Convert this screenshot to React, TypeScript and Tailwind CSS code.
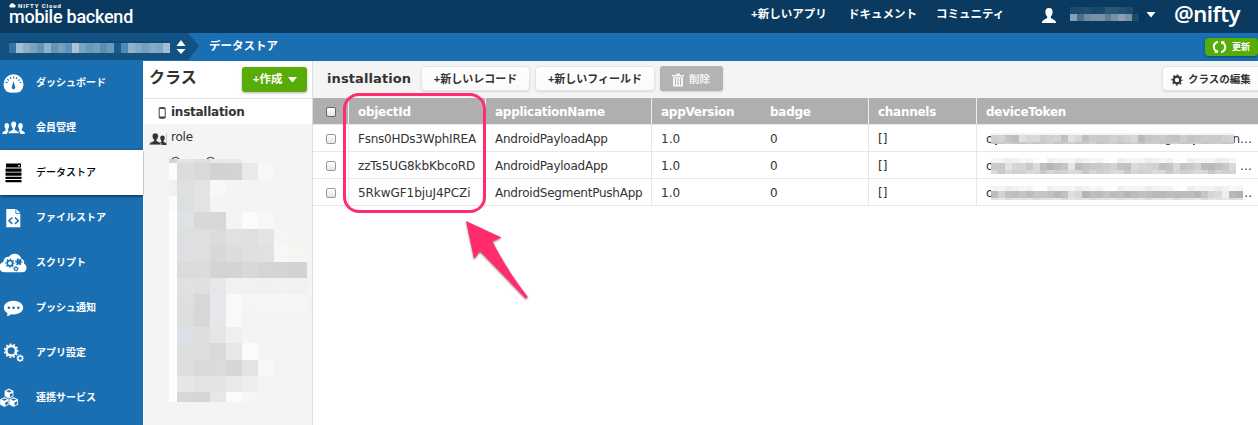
import React from "react";

const jp = "font-['Liberation_Sans','Noto_Sans_CJK_JP',sans-serif]";
const verdana = "font-['DejaVu_Sans','Noto_Sans_CJK_JP',sans-serif]";

function Gear({ cx, cy, r, w, color = "#fff", teeth = 8, tooth = 2 }: { cx: number; cy: number; r: number; w: number; color?: string; teeth?: number; tooth?: number }) {
  const outer = r + w / 2 + tooth / 2 - 0.2;
  const step = (2 * Math.PI * outer) / (teeth * 2);
  return (
    <g fill="none" stroke={color}>
      <circle cx={cx} cy={cy} r={r} strokeWidth={w} />
      <circle cx={cx} cy={cy} r={outer} strokeWidth={tooth} strokeDasharray={`${step} ${step}`} strokeDashoffset={step / 2} />
    </g>
  );
}

const person = "M0 0C-2.600 0-3.800 2-3.400 4.600C-3.200 6.400-2.400 7.600-1.700 8.300V9.600C-3 10.800-6.500 11-6.800 14.500H6.800C6.500 11 3 10.800 1.700 9.600V8.300C2.400 7.600 3.200 6.400 3.400 4.600C3.800 2 2.600 0 0 0Z";

function GaugeIcon() {
  return (
    <svg width="28" height="24" viewBox="0 0 28 24">
      <path d="M6.500 20.500A10 10 0 1 1 20.500 20.500Q18.500 21.800 13.500 21.800T6.500 20.500Z" fill="#fff" />
      <path d="M6.500 12A7.200 7.200 0 0 1 20.500 12" fill="none" stroke="#1a6fb2" strokeWidth="2" strokeDasharray="1.1 1.900" />
      <path d="M13.500 10L15 15.500A1.800 1.800 0 1 1 12 15.500Z" fill="#1a6fb2" />
    </svg>
  );
}

function MembersIcon() {
  return (
    <svg width="28" height="24" viewBox="0 0 28 24">
      <g fill="#fff">
        <path d={person} transform="translate(6.800 7) scale(.65 .75)" />
        <path d={person} transform="translate(20.500 7) scale(.65 .75)" />
        <path d={person} transform="translate(13.700 5) scale(.9 .88)" stroke="#1a6fb2" strokeWidth="1.300" />
      </g>
    </svg>
  );
}

function ServerIcon() {
  return (
    <svg width="28" height="24" viewBox="0 0 28 24">
      <g fill="#000">
        <rect x="6" y="2.500" width="15" height="4" />
        <rect x="5.500" y="7.400" width="16" height="3.300" rx=".5" />
        <rect x="5.500" y="11.600" width="16" height="3.200" rx=".5" />
        <rect x="5.500" y="15.700" width="16" height="2.400" rx=".5" />
        <rect x="5.500" y="18.900" width="16" height="2.400" rx=".5" />
      </g>
      <rect x="18" y="4.200" width="2" height="1.200" fill="#fff" />
    </svg>
  );
}

function FileCodeIcon() {
  return (
    <svg width="28" height="24" viewBox="0 0 28 24">
      <path d="M6.300 3H15.500V7.800H20.300V21.200H6.300Z M16.300 3L20.300 7H16.300Z" fill="#fff" />
      <path d="M12.300 11.500L9 14.700L12.300 17.900M15 11.500L18.300 14.700L15 17.900" fill="none" stroke="#1a6fb2" strokeWidth="1.500" />
    </svg>
  );
}

function ScriptIcon() {
  return (
    <svg width="28" height="24" viewBox="0 0 28 24">
      <path d="M4.500 21.300A5.300 5.300 0 0 1 3.300 10.900A5.300 5.300 0 0 1 9 5.700A6.900 6.900 0 0 1 21.300 7.600A4.300 4.300 0 0 1 24 12.500A4.700 4.700 0 0 1 22.500 21.300Z" fill="#fff" />
      <Gear cx={10} cy={12.200} r={2.700} w={1.700} color="#1a6fb2" tooth={1.300} />
      <Gear cx={18.800} cy={10.800} r={1.400} w={2.400} color="#1a6fb2" tooth={1.200} teeth={6} />
      <Gear cx={16} cy={17.700} r={1.500} w={1.100} color="#1a6fb2" tooth={0.900} teeth={6} />
    </svg>
  );
}

function ChatIcon() {
  return (
    <svg width="28" height="24" viewBox="0 0 28 24">
      <path d="M13.500 4.700C19 4.700 23.200 7.700 23.200 11.600S19 18.500 13.500 18.500C12.500 18.500 11.600 18.400 10.700 18.200C9.500 19.700 8.300 20 6.800 20C7.500 19 7.500 18 7.300 17.100C5.200 15.800 3.900 13.900 3.900 11.600C3.900 7.700 8 4.700 13.500 4.700Z" fill="#fff" />
      <g fill="#1a6fb2"><circle cx="8.900" cy="11.800" r="1.300" /><circle cx="13.600" cy="11.800" r="1.300" /><circle cx="18.300" cy="11.800" r="1.300" /></g>
    </svg>
  );
}

function SettingsIcon() {
  return (
    <svg width="28" height="24" viewBox="0 0 28 24">
      <Gear cx={11.200} cy={9.800} r={4.800} w={2.500} tooth={1.500} teeth={11} />
      <Gear cx={20.200} cy={17.200} r={2.300} w={1.500} tooth={0.900} teeth={8} />
    </svg>
  );
}

function CubesIcon() {
  const cube = "M0-5L4.500-2.800V2.700L0 5.100L-4.500 2.700V-2.800Z";
  return (
    <svg width="28" height="24" viewBox="0 0 28 24">
      {[[9, 7.600], [4.400, 16], [13.600, 16]].map(([x, y]) => (
        <g key={x} transform={`translate(${x} ${y})`}>
          <path d={cube} fill="#fff" stroke="#1a6fb2" strokeWidth=".3" />
          <path d="M-2.800-2.400L0-1.200L2.800-2.400L0-3.600ZM.9.500L3.500-.7V2.100L.9 3.500Z" fill="#1a6fb2" />
        </g>
      ))}
    </svg>
  );
}

const menu = [
  { label: "ダッシュボード", icon: <GaugeIcon /> },
  { label: "会員管理", icon: <MembersIcon /> },
  { label: "データストア", icon: <ServerIcon />, active: true },
  { label: "ファイルストア", icon: <FileCodeIcon /> },
  { label: "スクリプト", icon: <ScriptIcon /> },
  { label: "プッシュ通知", icon: <ChatIcon /> },
  { label: "アプリ設定", icon: <SettingsIcon /> },
  { label: "連携サービス", icon: <CubesIcon /> },
];

function Strip({ colors, cell, height, y = 0, x = 0 }: { colors: string[]; cell: number; height: number; y?: number; x?: number }) {
  return <>{colors.map((c, i) => <rect key={i} x={x + i * cell} y={y} width={cell + 0.05} height={height} fill={c} shapeRendering="crispEdges" />)}</>;
}

const xs = [8, 25, 41, 57, 73, 89, 105, 121, 138];
const ys = [4, 21, 37, 53, 70, 86, 103, 119, 135, 152, 168, 184, 201, 217, 233, 243];
const blocks = [
  ["#dcdcdc", "#d9d9d9", "#d2d2d2", "#d3d3d3", "#e9e9e9", "#f7f7f7"],
  ["#dfe0de", "#e3e3e3", "#f8f8f8", "#f4f4f4"],
  ["#dce0df", "#e2e3e5", "#f4f4f5", "#f3f4f3", "#f3f4f3", "#f3f4f3", "#f3f4f3", "#f3f4f3"],
  ["#dee1e6", "#d8d8d8", "#d7d7d7", "#f4f4f4", "#fbfbfb", "#f7f7f7"],
  ["#dde0de", "#dee0df", "#dbdddc", "#e1e1e1", "#dfdfdf", "#e4e4e4", "#f5f5f5"],
  ["#dddfe3", "#dfdfdf", "#d8d8d8", "#dcdcdc", "#dde0de", "#e1e1e1", "#f7f7f7", "#f5f5f2"],
  ["#d9dcdb", "#dadddb", "#d4d4d4", "#d4d4d4", "#d8d8d8", "#d3d6d4", "#d2d5d3", "#d2d2d2"],
  ["#dfe1e5", "#e0e0e0", "#e6e8e7", "#f1f1f1", "#f1f1f1", "#f0f0f0", "#f2f2f2", "#f1f1f1"],
  ["#dee0df", "#d7d7d7", "#e6e7ea", "#f9f9f9", "#f5f5f5", "#f6f6f6", "#f6f6f6", "#f6f6f6"],
  ["#dcdedd", "#d7d7d7", "#e6e7e9", "#f9f9f9", "#f3f3f3"],
  ["#dde0e5", "#dedede", "#e4e6e5", "#efefef", "#f4f4f4"],
  ["#dddfde", "#dcdedd", "#d9d9d9", "#e7e7e7", "#fbfbfb", "#f3f3f3"],
  ["#dcdedd", "#d9d9d9", "#dadcdb", "#d5d7d6", "#e2e4e3", "#f7f7f7"],
  ["#e4e6e9", "#e3e3e3", "#e3e3e3", "#e9e9e9", "#eeeeee", "#f4f4f4"],
  ["#d6d8d7", "#d5d5d5", "#e6e8e7", "#fbfbfb", "#f6f6f6"],
];

function ClassMosaic() {
  return (
    <svg width="138" height="243" className="block" shapeRendering="crispEdges">
      <rect width="8" height="243" fill="#fffefa" />
      <rect y="4" width="8" height="17" fill="#fcfcfc" /><rect y="21" width="8" height="16" fill="#f1f1f1" /><rect y="37" width="8" height="16" fill="#fffaf7" />
      <rect width="8" height="4" fill="#d3d3d3" /><rect x="8" width="17" height="4" fill="#e4e4e4" /><rect x="25" width="16" height="4" fill="#dfdfdf" /><rect x="41" width="32" height="4" fill="#e9e9e9" />
      {blocks.map((row, r) => row.map((c, i) => <rect key={`${r}-${i}`} x={xs[i]} y={ys[r]} width={xs[i + 1] - xs[i]} height={ys[r + 1] - ys[r]} fill={c} />))}
    </svg>
  );
}

const bars = [
  "#cfd0cf #d3d5d3 #c3c3c3 #bdbebf #dfe1e4 #d7d7d7 #d9dada #cdcdcd #d1d1d1 #d3d3d3 #c1c1c1 #e0e1e2 #d8d8d8 #bec0bf #cccccc #cacaca #cacaca #d1d1d1 #cccccc #d2d2d2 #d7d7d7 #bababa #c6c6c6 #cacaca #cacaca #c5c5c5 #c1c1c1 #cecece #c3c3c3 #c6c6c6 #cbcbcb #cbcbcb #c9c9c9 #d1d1d3 #d3d3d5",
  "#c8c9c8 #c9cac9 #e3e3e3 #d4d6d4 #d5d5d5 #c9c9c9 #d9dada #bfbfc1 #b5b6b8 #bdbebd #c6c6c6 #e5e5e5 #bcbdb8 #c6c6c1 #c7c8c7 #c8c9c8 #cdcdcd #d2d3d4 #c4c4c4 #bfc0bf #dcdcdc #d5d5d5 #d3d3d3 #d1d1d1 #bebfc0 #c2c4c6 #d7d8d7 #c2c3c2 #c7c8c7 #d1d1d1 #bcbcbe #b8b8bb #c1c1c3 #c8c8c8 #d7d9dc",
  "#bbbcb8 #d2d2d2 #c1c1c1 #bdbebd #c3c4c3 #bbbcbc #c5c5c5 #c4c5c4 #c1c1c1 #b7b8b9 #bfc0bf #dddede #d8d8d8 #b4b5b3 #bebebe #bbbcbb #c3c3c3 #bbbcbb #bfbfbf #b4b5b4 #bbbcbb #c0c0c2 #bebebe #b8b9b9 #b8b8bb #bcbdbf #bbbbbd #bdbdbe #bdbdbd #b5b6b5 #c4c5c4 #d4d5d4 #dbdbdb #eeeeee #b9b9b6 #b1b4b6",
].map((s) => s.split(" "));
const haze = "#f4f4f4 #f5f5f5 #ededed #f1f1f1 #f7f7f7 #f3f3f3 #fcfcfc #ffffff #efefef #f5f5f5".split(" ");
const lower = [
  "#c4c5c4 #cfcfcf #c9c9c9".split(" "),
  "#d7d8d7 #dadada #d2d2d2 #cfcfcf #d5d5d5 #c7c8c7".split(" "),
  "#e0e1e0 #e6e6e6 #dadbda #e3e3e3".split(" "),
];

function TokenCell({ row }: { row: number }) {
  const n = bars[row].length;
  return (
    <div className="relative flex h-full items-center pl-[9px] pt-px">
      <span>o</span>
      <span className="absolute right-[6px]">{row === 0 ? "n…" : row === 1 ? "…" : ".."}</span>
      <svg className="absolute left-[14px] top-[4px]" width={row === 0 ? 243 : 254} height="20">
        <Strip colors={Array.from({ length: n }, (_, i) => (row === 0 ? "#f4f4f4" : haze[i % 10]))} cell={7} height={6} y={row === 0 ? 4 : row === 1 ? 2 : 3} />
        <Strip colors={bars[row]} cell={7} height={8} y={row === 0 ? 6 : row === 1 ? 7 : 8} />
        <Strip colors={Array.from({ length: n }, (_, i) => lower[row][(i * 5) % lower[row].length])} cell={7} height={row === 1 ? 4 : 2} y={row === 0 ? 13 : row === 1 ? 14 : 15} />
        {row === 0 && <path d="M4 15.500H6M175 15.500H179M202 15.500H204" stroke="#555" />}
      </svg>
    </div>
  );
}

const records = [
  ["Fsns0HDs3WphIREA", "AndroidPayloadApp", "tracking-[-0.23px]"],
  ["zzTs5UG8kbKbcoRD", "AndroidPayloadApp", "tracking-[-0.12px]"],
  ["5RkwGF1bjuJ4PCZi", "AndroidSegmentPushApp", "tracking-[-0.06px]"],
];
const columns = "grid grid-cols-[35px_137px_166px_108px_109px_108px_282px]";

function Box({ dark = false }: { dark?: boolean }) {
  return <span className={`ml-[13px] size-[10px] rounded-[2px] border bg-gradient-to-b from-white to-[#e5e5e5] ${dark ? "border-[#666]" : "border-[#999]"}`} />;
}

const button = "flex items-center rounded-[4px] border border-[#e5e5e5] bg-gradient-to-b from-white to-[#fafafa] pt-[2px] font-bold text-[#333] shadow-[0_1px_2px_rgba(0,0,0,0.12)]";
const head = "flex items-center border-l border-[#eee] pl-[9px] tracking-[-0.28px]";
const cell = "flex items-center border-l border-[#e8e8e8] pl-[9px]";

export default function App() {
  return (
    <div className={`relative flex h-[425px] w-[1258px] flex-col overflow-hidden bg-white text-[#333] ${jp}`}>
      <header className="flex h-[33px] shrink-0 bg-[#0a3a5f] text-white">
        <div className="w-[751px] pl-[9px]">
          <div className="flex h-[10px] items-center gap-[2px] pt-px text-[6px] font-bold leading-none tracking-[0.9px] font-['Roboto',sans-serif]">
            <svg width="7" height="5" viewBox="0 0 7 5"><path d="M1.500 4.600A1.400 1.400 0 0 1 1 2A2.200 2.200 0 0 1 5 1.300A1.700 1.700 0 0 1 5.500 4.600Z" fill="#fff" /></svg>
            NIFTY Cloud
          </div>
          <div className="-mt-[3px] text-[18px] leading-[20px] tracking-[-0.25px] font-medium font-['Roboto',sans-serif]">mobile backend</div>
        </div>
        <nav className="flex h-[30px] shrink-0 items-center whitespace-nowrap text-[11.500px] font-bold">
          <span className="w-[97px]">+新しいアプリ</span>
          <span className="w-[88px]">ドキュメント</span>
          <span className="w-[104px]">コミュニティ</span>
        </nav>
        <svg className="mt-[8px] shrink-0" width="18" height="16" viewBox="0 0 18 16"><path d={person} transform="translate(9 0) scale(1.050 1.030)" fill="#fff" /></svg>
        <svg className="ml-[7px] mt-[7px] shrink-0" width="80" height="14" shapeRendering="crispEdges">
          <Strip colors={["#1d4a6d", "#1d4a6d", "#204e70", "#194669", "#18496a", "#2a5777", "#2a5777", "#264f70", "#204a6d"]} cell={7} height={7} x={5} />
          <Strip colors={["#87a0b5", "#49708e", "#6d8aa3", "#7590a8", "#7892a9", "#5c7e99", "#7690a7", "#8aa1b5", "#7891a7", "#1d4a6b", "#07345b"]} cell={6.900} height={7} y={7} x={5} />
        </svg>
        <svg className="ml-[1px] mt-[12px] shrink-0" width="10" height="6"><path d="M.5 0H9.500L5 5.500Z" fill="#fff" /></svg>
        <div className="ml-[18px] h-[33px] shrink-0 text-[22px] leading-[27px] font-semibold tracking-[-0.5px] font-['Noto_Sans',sans-serif]">@nifty</div>
      </header>

      <div className="flex h-[28px] shrink-0 bg-[#1a6fb2] text-white">
        <div className="flex h-[27px] w-[188px] bg-[#115282]">
          <svg className="ml-[9px] mt-[8px]" width="161" height="12" shapeRendering="crispEdges">
            <rect width="161" height="2" fill="#0e4a7b" />
            <Strip colors={["#3b729d", "#a5bfd2", "#8cafc8", "#7ca4c1", "#6295b7", "#91b0c9", "#6493b5", "#75a0bd", "#6292b5", "#a9c2d4", "#7ca2c0", "#649bbd", "#729fbe", "#5b8eb2", "#7198b8", "#165a8d", "#528ab0", "#94b1c8", "#82aac5", "#74a0c0", "#83abc7", "#7da6c3", "#a1bed2"]} cell={7} height={10} y={2} />
          </svg>
          <svg className="ml-[6px] mt-[7px]" width="10" height="15"><path d="M5 0L9.500 6H.5ZM.5 9H9.500L5 14Z" fill="#fff" /></svg>
        </div>
        <svg width="12" height="28"><path d="M0 0L11 13L0 27Z" fill="#115282" /></svg>
        <span className="ml-[9px] text-[11.500px] leading-[26px] font-bold">データストア</span>
        <button className="ml-auto mt-[5px] flex h-[18px] w-[53px] items-center gap-[5px] rounded-[4px] bg-[#56ad08] pl-[7px] text-[9px] font-bold shadow-[0_1px_3px_rgba(0,0,0,0.35)]">
          <svg width="15" height="14" viewBox="0 0 15 14"><g fill="none" stroke="#fff" strokeWidth="2"><path d="M5.800 1.800Q1.500 3.500 1.800 7Q2 10 4.500 12M9.200 12.200Q13.500 10.500 13.200 7Q13 4 10.500 2" /></g><path d="M2 12.800H6V9.500ZM13 1.200H9V4.500Z" fill="#fff" /></svg>
          <span className="pt-px">更新</span>
        </button>
      </div>

      <div className="flex min-h-0 flex-1">
        <nav className="-mt-[1px] w-[143px] shrink-0 bg-[#1a6fb2]">
          {menu.map((m) => (
            <div key={m.label} className={`flex h-[45px] items-center text-[10px] ${m.active ? "bg-white text-black font-medium shadow-[0_1px_3px_rgba(0,0,0,0.6)]" : "text-white font-bold"}`}>
              <span className="w-[36px] shrink-0">{m.icon}</span>
              <span>{m.label}</span>
            </div>
          ))}
        </nav>

        <aside className="relative ml-px w-[169px] shrink-0 border-r border-[#dedede] bg-[#f4f4f4]">
          <div className="flex h-[38px] border-b border-[#e4e4e4] bg-white pl-[5px]">
            <h2 className="text-[16px] leading-[34px] font-bold">クラス</h2>
            <button className="ml-[45px] mt-[6px] flex h-[25px] w-[65px] items-center rounded-[3px] bg-[#59ac08] pl-[11px] font-bold text-white shadow-[0_1px_3px_rgba(0,0,0,0.3)]">
              <span className="pt-px text-[11.500px]">+作成</span>
              <svg className="ml-[6px]" width="9" height="6"><path d="M0 0H9L4.500 5.500Z" fill="#fff" /></svg>
            </button>
          </div>
          <div className={`flex h-[25px] items-center bg-white pl-[14px] text-[12px] font-bold ${verdana}`}>
            <svg className="mt-[2px] mr-[5px]" width="8" height="12"><rect x="1.200" y=".7" width="6" height="10.600" rx="1" fill="#fff" stroke="#444" strokeWidth="1" /><path d="M1.200 1.300H7.200M1.200 10.300H7.200" stroke="#444" strokeWidth="1.600" /></svg>
            <span className="tracking-[-0.26px]">installation</span>
          </div>
          <div className={`flex h-[26px] items-center pl-[5px] text-[12px] ${verdana}`}>
            <svg className="mt-[3px] mr-[4px]" width="18" height="12" viewBox="0 0 18 12"><g fill="#333"><path d={person} transform="translate(13.500 2.500) scale(.65)" /><path d={person} transform="translate(6.300 0) scale(.9 .82)" stroke="#f4f4f4" strokeWidth=".8" /><path d="M17 0H17.600V12H17Z" fill="#aaa" /></g></svg>
            <span className="tracking-[-0.2px]">role</span>
          </div>
          <svg className="ml-[25px] block" width="60" height="9"><path d="M3 9Q7 5.500 10 9M38 9Q42 5.500 45 9" fill="none" stroke="#444" strokeWidth="1.200" /></svg>
          <div className="ml-[25px]"><ClassMosaic /></div>
        </aside>

        <main className="flex min-w-0 flex-1 flex-col">
          <div className="flex h-[37px] shrink-0 items-start bg-[#f4f4f4] pt-[5px]">
            <h1 className={`w-[108px] pl-[14px] text-[13px] leading-[26px] font-bold tracking-[0.1px] ${verdana}`}>installation</h1>
            <button className={`${button} h-[25px] w-[109px] justify-center text-[11px] whitespace-nowrap`}>+新しいレコード</button>
            <button className={`${button} ml-[5px] h-[25px] w-[120px] justify-center text-[11px] whitespace-nowrap`}>+新しいフィールド</button>
            <button className="ml-[5px] flex h-[25px] w-[63px] items-center rounded-[3px] bg-[#b3b3b3] pl-[12px] text-[10.500px] font-bold text-white shadow-[0_1px_2px_rgba(0,0,0,0.15)]">
              <svg className="mt-[2px] mr-[5px]" width="12" height="14" viewBox="0 0 12 14"><path d="M0 2H4V.5H8V2H12V3.500H0ZM1 4.300H11V13.500H1Z" fill="#f5f5f5" /><path d="M3.500 5.500V12M6 5.500V12M8.500 5.500V12" stroke="#aaa" strokeWidth=".9" /></svg>
              <span className="pt-[2px] text-[#f5f5f5]">削除</span>
            </button>
            <button className={`${button} -mr-[6px] ml-auto h-[25px] w-[102px] pl-[8px] text-[10.500px] whitespace-nowrap`}>
              <svg className="mr-[5px] shrink-0" width="12" height="12"><Gear cx={6} cy={6} r={3.300} w={2.200} color="#333" tooth={1.400} teeth={8} /></svg>
              クラスの編集
            </button>
          </div>
          <div className={`text-[12px] ${verdana}`}>
            <div className={`${columns} h-[27px] items-stretch border-b border-[#e8e8e8] bg-[#afafaf] pt-0 font-bold text-white`}>
              <div className="flex items-center pt-px"><Box dark /></div>
              <div className={`${head} pt-[2px]`}>objectId</div>
              <div className={`${head} pt-[2px]`}>applicationName</div>
              <div className={`${head} pt-[2px]`}>appVersion</div>
              <div className="flex items-center pl-[11px] pt-[2px] tracking-[-0.28px]">badge</div>
              <div className={`${head} pt-[2px]`}>channels</div>
              <div className={`${head} pt-[2px]`}>deviceToken</div>
            </div>
            {records.map(([id, app, spacing], i) => (
              <div key={id} className={`${columns} h-[27px] items-stretch border-b border-[#e8e8e8] bg-white`}>
                <div className="flex items-center pt-[2px]"><Box /></div>
                <div className={`${cell} pt-[2px] ${spacing}`}>{id}</div>
                <div className={`${cell} pt-[2px] tracking-[-0.23px]`}>{app}</div>
                <div className={`${cell} pt-[2px]`}>1.0</div>
                <div className="flex items-center pl-[11px] pt-[2px]">0</div>
                <div className={`${cell} pt-[2px]`}>[]</div>
                <div className="border-l border-[#e8e8e8]"><TokenCell row={i} /></div>
              </div>
            ))}
          </div>
        </main>
      </div>

      <div className="pointer-events-none absolute left-[343px] top-[93px] h-[120px] w-[143px] rounded-[16px] border-[3px] border-[#ff2d6c]" />
      <svg className="pointer-events-none absolute left-[460px] top-[215px] drop-shadow-[0_1px_1px_rgba(0,0,0,0.45)]" width="75" height="90">
        <path d="M6 6L41.500 22.500L32.500 26.500Q45 52 67.500 81.500Q67.500 84 65.500 83.500Q45 62 20 36.500L14 44Z" fill="#ff2d6c" />
      </svg>
    </div>
  );
}
